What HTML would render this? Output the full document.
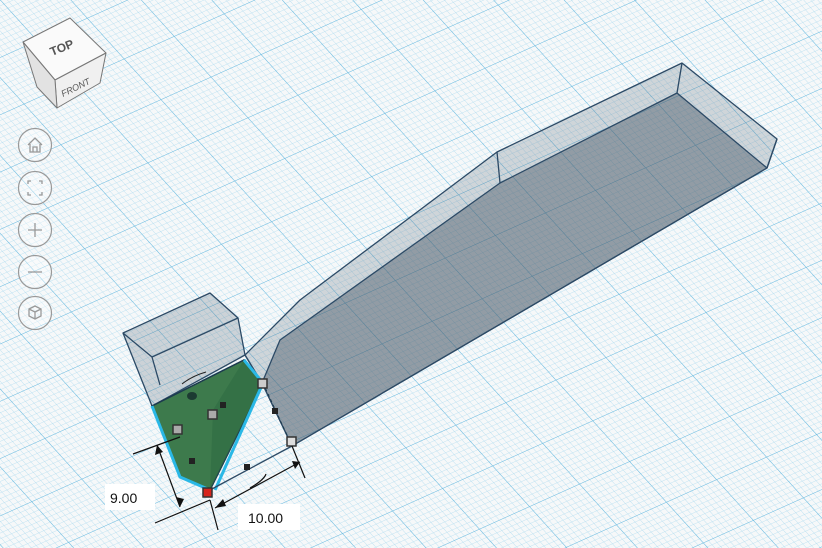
<!DOCTYPE html>
<html><head><meta charset="utf-8"><style>
html,body{margin:0;padding:0;width:822px;height:548px;overflow:hidden;background:#fff}
svg{display:block}
</style></head><body>
<svg width="822" height="548" viewBox="0 0 822 548" xmlns="http://www.w3.org/2000/svg">
<defs>
<pattern id="minor" width="5.5" height="5.5" patternUnits="userSpaceOnUse" patternTransform="matrix(0.91 -0.41 0.67 0.74 0 0)">
<path d="M0 0H5.5M0 0V5.5" stroke="#aedbf0" stroke-width="0.75" fill="none"/>
</pattern>
<pattern id="major" width="55" height="55" patternUnits="userSpaceOnUse" patternTransform="matrix(0.91 -0.41 0.67 0.74 0 0)">
<path d="M0 0H55M0 0V55" stroke="#6cbbe0" stroke-width="1.1" fill="none"/>
</pattern>
</defs>
<rect width="822" height="548" fill="#f6f8f9"/>
<rect width="822" height="548" fill="url(#minor)"/>
<rect width="822" height="548" fill="url(#major)"/>

<g stroke="#2c4a66" stroke-width="1.3" stroke-linejoin="round">
<polygon points="497,152 682,63 777,139 767,168 292,446 262,383 245,355 300,300" fill="#6a7a88" fill-opacity="0.28"/>
<polygon points="500,183 677,93 767,168 292,446 262,383 280,340" fill="#3e4e5e" fill-opacity="0.42"/>
<polyline points="497,152 500,183" fill="none"/>
<polyline points="682,63 677,93" fill="none"/>
<polyline points="777,139 767,168" fill="none"/>
<polyline points="245,355 262,383" fill="none"/>
</g>
<g stroke="#2c4a66" stroke-width="1.3" stroke-linejoin="round">
<polygon points="123,333 210,293 238,318 245,355 152,406" fill="#6a7a88" fill-opacity="0.3"/>
<polyline points="123,333 152,357 238,318" fill="none"/>
<polyline points="152,357 160,385" fill="none"/>
</g>
<polygon points="152,406 244,360 263,383 210,490 180,477" fill="#3d7a4c" stroke="#1c3a4e" stroke-width="1.5"/>
<polygon points="213,410 244,360 263,383 210,490" fill="#2f6a42" opacity="0.6"/>
<polyline points="152,406 180,477 210,490" fill="none" stroke="#2ab8e6" stroke-width="3"/>
<polyline points="244,360 263,383 215,490" fill="none" stroke="#2ab8e6" stroke-width="3"/>
<polyline points="210,490 292,446" fill="none" stroke="#2c4a66" stroke-width="1.3"/>
<polyline points="263,383 292,446" fill="none" stroke="#1c3a4e" stroke-width="1" stroke-dasharray="3,3"/>
<g stroke="#333" stroke-width="1.5">
<rect x="203" y="488" width="9" height="9" fill="#d6241c"/>
<rect x="258" y="379" width="9" height="9" fill="#ccc"/>
<rect x="173" y="425" width="9" height="9" fill="#aaa"/>
<rect x="208" y="410" width="9" height="9" fill="#aaa"/>
<rect x="287" y="437" width="9" height="9" fill="#ddd"/>
</g>
<g fill="#222">
<rect x="272" y="408" width="6" height="6"/><rect x="244" y="464" width="6" height="6"/><rect x="189" y="458" width="6" height="6"/><rect x="220" y="402" width="6" height="6"/>
</g>
<ellipse cx="192" cy="396" rx="5" ry="4" fill="#1c3a32"/>
<path d="M182 384 Q192 376 206 372" fill="none" stroke="#222" stroke-width="1"/>
<g stroke="#111" stroke-width="1.2" fill="none">
<path d="M133 454 L180 437 M155 523 L210 500 M157 445 L180 507"/>
<path d="M210 500 L218 530 M292 446 L305 478 M215 508 L300 462"/>
<path d="M250 488 Q264 480 266 474"/>
</g>
<g fill="#111"><polygon points="157,445 155,455 163,452"/><polygon points="180,507 176,497 184,499"/><polygon points="215,508 223,499 226,506"/><polygon points="300,462 292,461 295,469"/></g>
<rect x="105" y="484" width="50" height="26" fill="#fff"/>
<text x="110" y="503" font-family="Liberation Sans, sans-serif" font-size="14" fill="#111">9.00</text>
<rect x="238" y="504" width="62" height="26" fill="#fff"/>
<text x="248" y="523" font-family="Liberation Sans, sans-serif" font-size="14" fill="#111">10.00</text>

<g stroke="#777" stroke-width="1" stroke-linejoin="round">
<polygon points="23,42 70,18 106,53 55,80" fill="#fafafa"/>
<polygon points="55,80 106,53 100,83 57,108" fill="#f0f0f0"/>
<polygon points="23,42 55,80 57,108 37,87" fill="#e2e2e2"/>
</g>
<text x="0" y="0" transform="translate(52,56) rotate(-22)" font-family="Liberation Sans, sans-serif" font-weight="bold" font-size="12" fill="#555">TOP</text>
<text x="0" y="0" transform="translate(63,97) rotate(-26)" font-family="Liberation Sans, sans-serif" font-style="italic" font-size="9" fill="#555">FRONT</text>
<g fill="#ffffff" fill-opacity="0.35" stroke="#999" stroke-width="1.2">
<circle cx="35" cy="145" r="16.5"/><circle cx="35" cy="188" r="16.5"/><circle cx="35" cy="230" r="16.5"/><circle cx="35" cy="272" r="16.5"/><circle cx="35" cy="313" r="16.5"/>
</g>
<g fill="none" stroke="#999" stroke-width="1.3">
<path d="M28 145 L35 138 L42 145 M30 144 V152 H40 V144 M33 152 V147 H37 V152"/>
<path d="M28 184 V181 H31 M39 181 H42 V184 M42 192 V195 H39 M31 195 H28 V192"/>
<path d="M28 230 H42 M35 223 V237"/>
<path d="M28 272 H42"/>
<path d="M29 309 L35 306 L41 309 V316 L35 319 L29 316 Z M35 312 V319 M29 309 L35 312 L41 309"/>
</g>
</svg>
</body></html>
